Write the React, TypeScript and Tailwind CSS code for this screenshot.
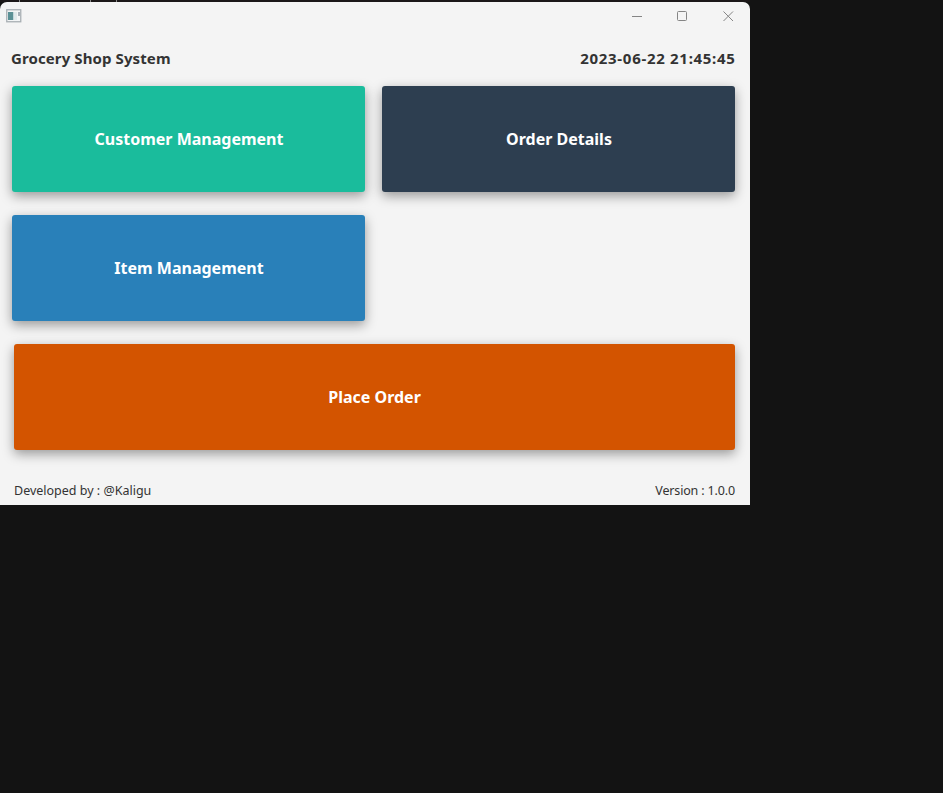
import type { ReactNode } from "react";

function Tile({ className, children }: { className: string; children: ReactNode }) {
  return (
    <button
      className={`flex h-[106px] items-center justify-center rounded-[3px] text-base font-bold text-white shadow-[0_4px_12px_rgba(0,0,0,0.38)] ${className}`}
    >
      {children}
    </button>
  );
}

function AppIcon() {
  return (
    <svg width="16" height="14" viewBox="0 0 16 14">
      <rect x="0.75" y="0.75" width="14" height="12" fill="#f3f5f6" stroke="#a9b0b4" strokeWidth="1.3" />
      <rect x="2" y="3" width="5.5" height="8" fill="#5a9095" />
      <rect x="7.5" y="3" width="3.5" height="8" fill="#dfe9eb" />
      <rect x="12" y="3" width="2" height="4" fill="#a8b2ba" />
    </svg>
  );
}

function TitleBar() {
  return (
    <div className="flex h-[30px] items-start justify-between pl-1.5 pr-4">
      <div className="pt-[7px]">
        <AppIcon />
      </div>
      <svg className="mt-2" width="102" height="12" viewBox="0 0 102 12" fill="none" stroke="#858585" strokeWidth="1">
        <path d="M0 6.5H10" />
        <rect x="45.5" y="1.5" width="9" height="9" rx="1" />
        <path d="M91.5 1.5l9.5 9.5M101 1.5l-9.5 9.5" />
      </svg>
    </div>
  );
}

export default function App() {
  return (
    <div className="h-[793px] w-[943px] overflow-hidden bg-[#131313] font-['Noto_Sans',sans-serif] text-[#333333]">
      <div className="flex h-0.5 w-[750px] bg-[#1b1718]">
        <span className="ml-[19px] w-px bg-[#8b8b8b]" />
        <span className="ml-[70px] w-px bg-[#8b8b8b]" />
        <span className="ml-[25px] w-px bg-[#8b8b8b]" />
      </div>
      <main className="h-[503px] w-[750px] rounded-t-[7px] bg-[#f4f4f4]">
        <TitleBar />
        <header className="flex h-[54px] items-center justify-between pb-0.5 pl-[11px] pr-[15px] text-[15px] font-bold">
          <h1 className="tracking-[0.1px]">Grocery Shop System</h1>
          <time className="mr-[-0.6px] tracking-[0.7px]">2023-06-22 21:45:45</time>
        </header>
        <div className="grid grid-cols-[353px_353px] gap-x-[17px] gap-y-[23px] pl-3">
          <Tile className="bg-[#1abc9c] pl-px">Customer Management</Tile>
          <Tile className="bg-[#2d3e50] pl-px">Order Details</Tile>
          <Tile className="bg-[#2980b9] pl-px">Item Management</Tile>
          <Tile className="col-span-2 ml-0.5 bg-[#d35400]">Place Order</Tile>
        </div>
        <footer className="flex justify-between pl-3.5 pr-[15px] pt-[31px] text-[12.5px] leading-5">
          <span>Developed by : @Kaligu</span>
          <span className="tracking-[-0.15px]">Version : 1.0.0</span>
        </footer>
      </main>
    </div>
  );
}
